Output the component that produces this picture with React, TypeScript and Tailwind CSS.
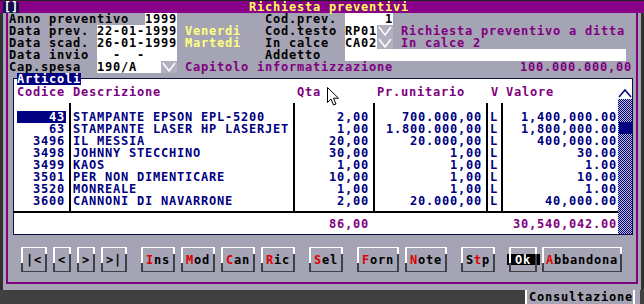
import React from "react";

const codes = ["43", "63", "3496", "3498", "3499", "3501", "3520", "3600"];
const descs = [
  "STAMPANTE EPSON EPL-5200",
  "STAMPANTE LASER HP LASERJET",
  "IL MESSIA",
  "JOHNNY STECCHINO",
  "KAOS",
  "PER NON DIMENTICARE",
  "MONREALE",
  "CANNONI DI NAVARRONE",
];
const qtas = ["2,00", "1,00", "20,00", "30,00", "1,00", "10,00", "1,00", "2,00"];
const prs = ["700.000,00", "1.800.000,00", "20.000,00", "1,00", "1,00", "1,00", "1,00", "20.000,00"];
const vals = ["1,400,000.00", "1,800,000.00", "400,000.00", "30.00", "1.00", "10.00", "1.00", "40,000.00"];

function Chevron({ w }: { w: string }) {
  return (
    <span className={`${w} h-[12px] shrink-0 bg-[#b0b0c0] flex items-center justify-center`}>
      <svg width="16" height="12" viewBox="0 0 16 12">
        <polyline points="2,2 8,10 14,2" fill="none" stroke="#ffffff" strokeWidth="1.5" />
      </svg>
    </span>
  );
}

type Btn = { label: string; w: string; ml: string; red: number; ok?: boolean };
const buttons: Btn[] = [
  { label: "|<", w: "w-[26px]", ml: "ml-0", red: -1 },
  { label: "<", w: "w-[18px]", ml: "ml-[6px]", red: -1 },
  { label: ">", w: "w-[18px]", ml: "ml-[6px]", red: -1 },
  { label: ">|", w: "w-[26px]", ml: "ml-[6px]", red: -1 },
  { label: "Ins", w: "w-[34px]", ml: "ml-[14px]", red: 0 },
  { label: "Mod", w: "w-[34px]", ml: "ml-[6px]", red: 0 },
  { label: "Can", w: "w-[34px]", ml: "ml-[6px]", red: 0 },
  { label: "Ric", w: "w-[34px]", ml: "ml-[6px]", red: 0 },
  { label: "Sel", w: "w-[34px]", ml: "ml-[14px]", red: 0 },
  { label: "Forn", w: "w-[42px]", ml: "ml-[14px]", red: 0 },
  { label: "Note", w: "w-[42px]", ml: "ml-[6px]", red: 0 },
  { label: "Stp", w: "w-[34px]", ml: "ml-[14px]", red: 1 },
  { label: "Ok", w: "w-[28px]", ml: "ml-[14px]", red: -1, ok: true },
  { label: "Abbandona", w: "w-[80px]", ml: "ml-[5px]", red: 0 },
];

function Button({ b }: { b: Btn }) {
  return (
    <div className={`relative ${b.w} ${b.ml} h-[25px] shrink-0 flex items-center justify-center`}>
      <span className="absolute left-0 right-0 top-0 h-[1px] bg-white" />
      <span className="absolute left-0 right-0 bottom-0 h-[1px] bg-[#404048]" />
      <span className="absolute left-0 top-0 w-[2px] h-[16px] bg-white" />
      <span className="absolute left-0 top-[16px] bottom-0 w-[2px] bg-[#404048]" />
      <span className="absolute right-0 top-0 w-[2px] h-[7px] bg-white" />
      <span className="absolute right-0 top-[7px] bottom-0 w-[2px] bg-[#404048]" />
      {b.ok ? (
        <span className="w-[33px] shrink-0 h-[11px] bg-black text-white flex items-center justify-center">Ok</span>
      ) : (
        <span className="text-black whitespace-pre">
          {b.label.split("").map((c, i) => (
            <span key={i} className={i === b.red ? "text-[#e00000]" : ""}>
              {c}
            </span>
          ))}
        </span>
      )}
    </div>
  );
}

function Sep() {
  return <div className="w-[2px] shrink-0 self-stretch bg-black" />;
}
function Gap() {
  return <div className="w-[2px] shrink-0" />;
}

export default function App() {
  return (
    <div className="relative w-[644px] h-[304px] overflow-hidden bg-[#303030] font-['DejaVu_Sans_Mono','Liberation_Mono',monospace] font-bold text-[12px] leading-[12px] tracking-[0.775px] text-black">
      {/* title bar */}
      <div className="h-[13px] border-t border-[#202020] bg-[#880088] flex items-center">
        <span className="ml-[3px] w-[16px] h-[11px] bg-[#10104a] text-white flex items-center justify-center tracking-normal">[]</span>
        <span className="ml-[230px] text-[#ffff55]">Richiesta preventivi</span>
      </div>

      {/* body */}
      <div className="ml-[3px] w-[638px] h-[277px] bg-[#a4a4b4] pl-[3px]">
        <div className="w-[632px] h-[271px] border-x-2 border-b-2 border-[#800080] flex flex-col">
          {/* row 1 */}
          <div className="flex h-[12px] pl-[1px] whitespace-pre">
            <span className="w-[136px] shrink-0">Anno preventivo</span>
            <span className="w-[32px] shrink-0 bg-white text-right">1999</span>
            <span className="w-[88px] shrink-0" />
            <span className="w-[80px] shrink-0">Cod.prev.</span>
            <span className="w-[48px] shrink-0 bg-white text-right">1</span>
          </div>
          {/* row 2 */}
          <div className="flex h-[12px] pl-[1px] whitespace-pre">
            <span className="w-[88px] shrink-0">Data prev.</span>
            <span className="w-[80px] shrink-0 bg-white">22-01-1999</span>
            <span className="w-[8px] shrink-0" />
            <span className="w-[80px] shrink-0 text-[#ffff80]">Venerdi</span>
            <span className="w-[80px] shrink-0">Cod.testo</span>
            <span className="w-[32px] shrink-0 bg-white">RP01</span>
            <Chevron w="w-[16px]" />
            <span className="w-[8px] shrink-0" />
            <span className="text-[#800080]">Richiesta preventivo a ditta</span>
          </div>
          {/* row 3 */}
          <div className="flex h-[12px] pl-[1px] whitespace-pre">
            <span className="w-[88px] shrink-0">Data scad.</span>
            <span className="w-[80px] shrink-0 bg-white">26-01-1999</span>
            <span className="w-[8px] shrink-0" />
            <span className="w-[80px] shrink-0 text-[#ffff80]">Martedi</span>
            <span className="w-[80px] shrink-0">In calce</span>
            <span className="w-[32px] shrink-0 bg-white">CA02</span>
            <Chevron w="w-[16px]" />
            <span className="w-[8px] shrink-0" />
            <span className="text-[#800080]">In calce 2</span>
          </div>
          {/* row 4 */}
          <div className="flex h-[12px] pl-[1px] whitespace-pre">
            <span className="w-[88px] shrink-0">Data invio</span>
            <span className="w-[80px] shrink-0 bg-white">{"  -  -    "}</span>
            <span className="w-[88px] shrink-0" />
            <span className="w-[80px] shrink-0">Addetto</span>
            <span className="w-[281px] shrink-0 bg-white" />
          </div>
          {/* row 5 */}
          <div className="flex h-[12px] pl-[1px] pr-[4px] whitespace-pre">
            <span className="w-[88px] shrink-0">Cap.spesa</span>
            <span className="w-[64px] shrink-0 bg-white">190/A</span>
            <Chevron w="w-[16px]" />
            <span className="w-[8px] shrink-0" />
            <span className="flex-1 text-[#800080]">Capitolo informatizzazione</span>
            <span className="text-[#800080]">100.000.000,00</span>
          </div>

          {/* Articoli panel */}
          <div className="relative mt-[5px] ml-[5px] w-[620px] h-[157px] shrink-0 border border-[#101040] bg-white flex">
            <span className="absolute left-[3px] top-[-6px] h-[12px] bg-[#000080] text-white">Articoli</span>
            <div className="w-[604px] shrink-0 flex flex-col">
              {/* header */}
              <div className="h-[24px] pt-[7px] flex text-[#800080] whitespace-pre">
                <div className="w-[55px] shrink-0 pl-[3px]">Codice</div>
                <Gap />
                <div className="w-[222px] shrink-0 pl-[2px]">Descrizione</div>
                <Gap />
                <div className="w-[78px] shrink-0 pl-[2px]">Qta</div>
                <Gap />
                <div className="w-[111px] shrink-0 pl-[2px]">Pr.unitario</div>
                <Gap />
                <div className="w-[13px] shrink-0 pl-[3px]">V</div>
                <Gap />
                <div className="w-[115px] shrink-0 pl-[3px]">Valore</div>
              </div>
              {/* data */}
              <div className="h-[108px] flex text-[#000080] whitespace-pre">
                <div className="w-[55px] shrink-0 pt-[8px] flex flex-col">
                  {codes.map((c, i) => (
                    <div
                      key={c}
                      className={`h-[12px] mx-[3px] pr-[1px] text-right ${i === 0 ? "bg-[#000080] text-white" : ""}`}
                    >
                      {c}
                    </div>
                  ))}
                </div>
                <Sep />
                <div className="w-[222px] shrink-0 pt-[8px] pl-[2px] flex flex-col">
                  {descs.map((d) => (
                    <div key={d} className="h-[12px]">
                      {d}
                    </div>
                  ))}
                </div>
                <Sep />
                <div className="w-[78px] shrink-0 pt-[8px] pr-[4px] flex flex-col text-right">
                  {qtas.map((q, i) => (
                    <div key={i} className="h-[12px]">
                      {q}
                    </div>
                  ))}
                </div>
                <Sep />
                <div className="w-[111px] shrink-0 pt-[8px] pr-[4px] flex flex-col text-right">
                  {prs.map((p, i) => (
                    <div key={i} className="h-[12px]">
                      {p}
                    </div>
                  ))}
                </div>
                <Sep />
                <div className="w-[13px] shrink-0 pt-[8px] pl-[2px] flex flex-col">
                  {prs.map((_, i) => (
                    <div key={i} className="h-[12px]">
                      L
                    </div>
                  ))}
                </div>
                <Sep />
                <div className="w-[115px] shrink-0 pt-[8px] pr-[1px] flex flex-col text-right">
                  {vals.map((v, i) => (
                    <div key={i} className="h-[12px]">
                      {v}
                    </div>
                  ))}
                </div>
              </div>
              <div className="h-[2px] bg-black" />
              {/* totals */}
              <div className="h-[21px] pt-[5px] flex text-[#800080]">
                <div className="w-[55px] shrink-0" />
                <Gap />
                <div className="w-[222px] shrink-0" />
                <Gap />
                <div className="w-[78px] shrink-0 pr-[4px] text-right">86,00</div>
                <Gap />
                <div className="w-[111px] shrink-0" />
                <Gap />
                <div className="w-[13px] shrink-0" />
                <Gap />
                <div className="w-[115px] shrink-0 pr-[1px] text-right">30,540,042.00</div>
              </div>
            </div>
            {/* scrollbar */}
            <div className="w-[14px] shrink-0 flex flex-col pt-[9px]">
              <div className="h-[11px] flex items-center justify-center bg-white">
                <svg width="14" height="11" viewBox="0 0 14 11">
                  <polyline points="1,9 7,2 13,9" fill="none" stroke="#000080" strokeWidth="1.5" />
                </svg>
              </div>
              <div className="relative flex-1 bg-[repeating-conic-gradient(#000080_0%_25%,#c0c0d0_0%_50%)] bg-[length:2px_2px]">
                <div className="absolute left-[1px] right-0 top-[23px] h-[12px] bg-[#000080]" />
              </div>
            </div>
          </div>

          {/* buttons */}
          <div className="mt-[12px] ml-[13px] flex">
            {buttons.map((b) => (
              <Button key={b.label} b={b} />
            ))}
          </div>
        </div>
      </div>

      {/* status bar */}
      <div className="h-[14px] bg-[#404040] flex justify-end">
        <div className="mr-[4px] w-[115px] h-[14px] bg-[#a4a4b4] flex items-center">
          <span className="w-[2px] h-[14px] bg-white shrink-0" />
          <span className="pl-[2px] w-[106px] shrink-0">Consultazione</span>
          <span className="w-[2px] h-[14px] bg-white shrink-0" />
        </div>
      </div>

      {/* mouse cursor */}
      <svg className="absolute left-[327px] top-[87px]" width="13" height="19" viewBox="0 0 13 19">
        <path d="M0.5,0.5 L0.5,15.5 L4,12 L6.5,18 L9,17 L6.5,11.2 L11.5,11.2 Z" fill="#ffffff" stroke="#000000" strokeWidth="1" />
      </svg>
    </div>
  );
}
